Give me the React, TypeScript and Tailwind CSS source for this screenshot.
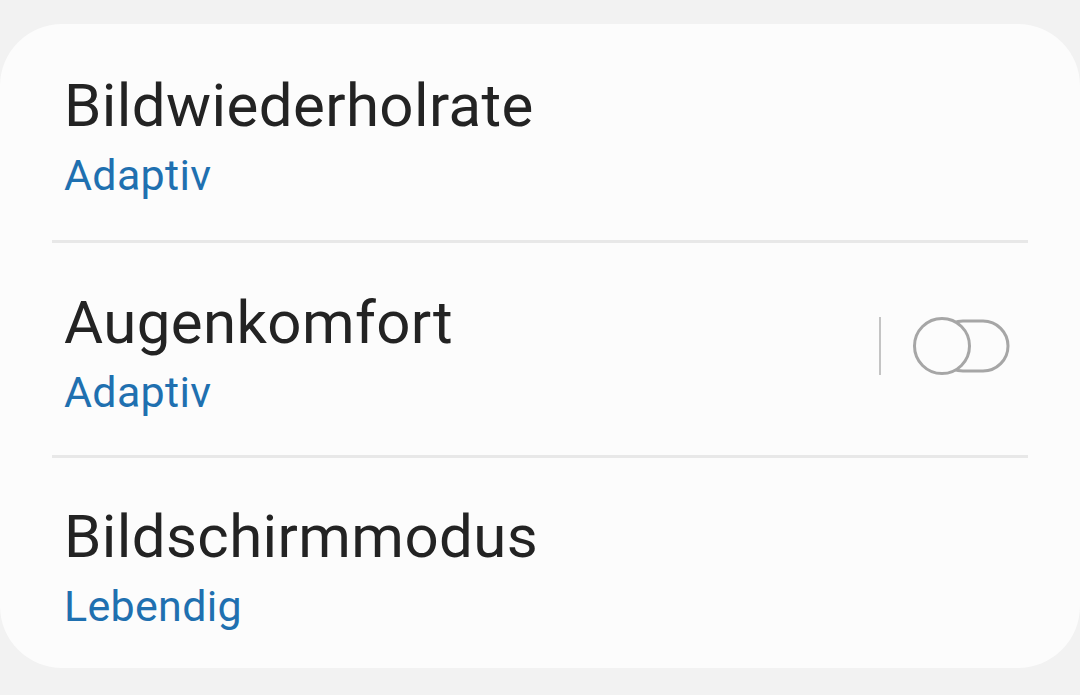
export default function App() {
  const rows = [
    { title: "Bildwiederholrate", sub: "Adaptiv", toggle: false, h: "h-[216px]" },
    { title: "Augenkomfort", sub: "Adaptiv", toggle: true, h: "h-[212px]" },
    { title: "Bildschirmmodus", sub: "Lebendig", toggle: false, h: "h-[210px]" },
  ];

  return (
    <div
      className="w-[1080px] h-[695px] bg-[#f2f2f2] pt-[24px] overflow-hidden"
      style={{ fontFamily: "Roboto, 'Noto Sans', sans-serif" }}
    >
      <div className="w-[1080px] bg-[#fcfcfc] rounded-[62px] flex flex-col">
        {rows.map((r, i) => (
          <div key={r.title}>
            {i > 0 && <div className="mx-[52px] h-[3px] bg-[#e8e8e8]" />}
            <div className={`${r.h} flex items-center pl-[64px] pr-[70px]`}>
              <div className="flex-1 flex flex-col mt-[12px]">
                <div className="text-[60px] leading-[64px] text-[#232323] tracking-[0.4px]">
                  {r.title}
                </div>
                <div className="mt-[10px] text-[43px] leading-[54px] text-[#1f70b0] tracking-[0.3px]">
                  {r.sub}
                </div>
              </div>
              {r.toggle && (
                <div className="flex items-center gap-[31px] -mt-[6px] mr-[-2px]">
                  <div className="w-[2px] h-[58px] bg-[#c4c4c4]" />
                  <svg width="100" height="60" viewBox="0 0 100 60">
                    <rect
                      x="26"
                      y="5"
                      width="70"
                      height="50"
                      rx="25"
                      fill="none"
                      stroke="#a6a6a6"
                      strokeWidth="3"
                    />
                    <circle cx="30" cy="30" r="27.5" fill="#fcfcfc" stroke="#a6a6a6" strokeWidth="3" />
                  </svg>
                </div>
              )}
            </div>
          </div>
        ))}
      </div>
    </div>
  );
}
